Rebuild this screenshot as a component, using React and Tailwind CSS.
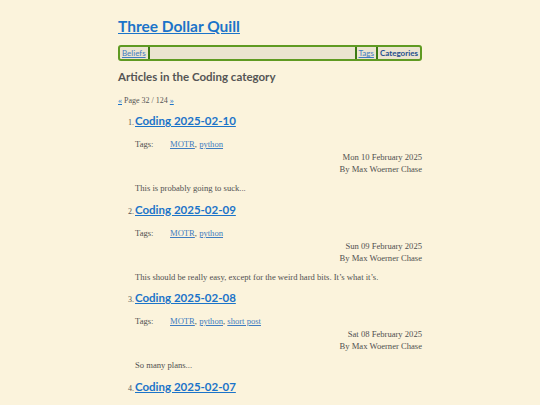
const articles = [
  {
    n: 1,
    title: "Coding 2025-02-10",
    tags: ["MOTR", "python"],
    date: "Mon 10 February 2025",
    summary: "This is probably going to suck...",
  },
  {
    n: 2,
    title: "Coding 2025-02-09",
    tags: ["MOTR", "python"],
    date: "Sun 09 February 2025",
    summary:
      "This should be really easy, except for the weird hard bits. It\u2019s what it\u2019s.",
  },
  {
    n: 3,
    title: "Coding 2025-02-08",
    tags: ["MOTR", "python", "short post"],
    date: "Sat 08 February 2025",
    summary: "So many plans...",
  },
  {
    n: 4,
    title: "Coding 2025-02-07",
  },
];

const head = { fontFamily: "Lato, 'Open Sans', sans-serif" };
const body = { fontFamily: "'Liberation Serif', 'DejaVu Serif', serif" };

export default function App() {
  return (
    <div className="h-[405px] overflow-hidden bg-[#fbf3dc] text-[#555]">
      <div className="mx-auto w-[304px] pt-[14px]">
        {/* ===== HEADER ===== */}
        <h1 style={head} className="text-[15.5px] font-bold leading-[24px]">
          <a className="text-[#1b74c9] underline">Three Dollar Quill</a>
        </h1>

        <nav
          style={head}
          className="mt-[7px] flex items-center border-2 border-[#5f9a22] rounded-[3px] bg-[#ebe4d0] h-[16px] text-[8px] leading-[12px]"
        >
          <a className="px-[2px] text-[#3f7cc0] underline border-r-2 border-[#3b7a12]">
            Beliefs
          </a>
          <div className="flex-1" />
          <a className="px-[2px] text-[#3f7cc0] underline border-l-2 border-[#3b7a12]">
            Tags
          </a>
          <a className="px-[2px] text-[#1f4f8c] font-bold border-l-2 border-[#3b7a12]">
            Categories
          </a>
        </nav>

        {/* ===== CONTENT ===== */}
        <h2 style={head} className="mt-[7px] text-[11.5px] font-bold text-[#555] leading-[18px]">
          Articles in the Coding category
        </h2>

        <p style={body} className="mt-[10px] text-[8px] leading-[10px]">
          <a className="text-[#1b74c9] underline">«</a> Page 32 / 124{" "}
          <a className="text-[#1b74c9] underline">»</a>
        </p>

        <ol className="mt-[6px]">
          {articles.map((a) => (
            <li key={a.n} className="h-[88.5px]">
              <div className="flex items-baseline">
                <span style={body} className="w-[17px] pl-[10px] text-[8px]">
                  {a.n}.
                </span>
                <a
                  style={head}
                  className="text-[11.5px] font-bold leading-[18px] text-[#1b74c9] underline"
                >
                  {a.title}
                </a>
              </div>

              {a.tags && (
                <div style={body} className="pl-[17px] text-[8.6px] leading-[12px] text-[#505050]">
                  <div className="mt-[8px] flex">
                    <span className="w-[35px]">Tags:</span>
                    <span>
                      {a.tags.map((t, i) => (
                        <span key={t}>
                          <a className="text-[#3f7cc0] underline">{t}</a>
                          {i < a.tags.length - 1 ? ", " : ""}
                        </span>
                      ))}
                    </span>
                  </div>
                  <div className="mt-[1px] text-right">
                    <div>{a.date}</div>
                    <div>By Max Woerner Chase</div>
                  </div>
                  <p className="mt-[7px]">{a.summary}</p>
                </div>
              )}
            </li>
          ))}
        </ol>
      </div>
    </div>
  );
}
